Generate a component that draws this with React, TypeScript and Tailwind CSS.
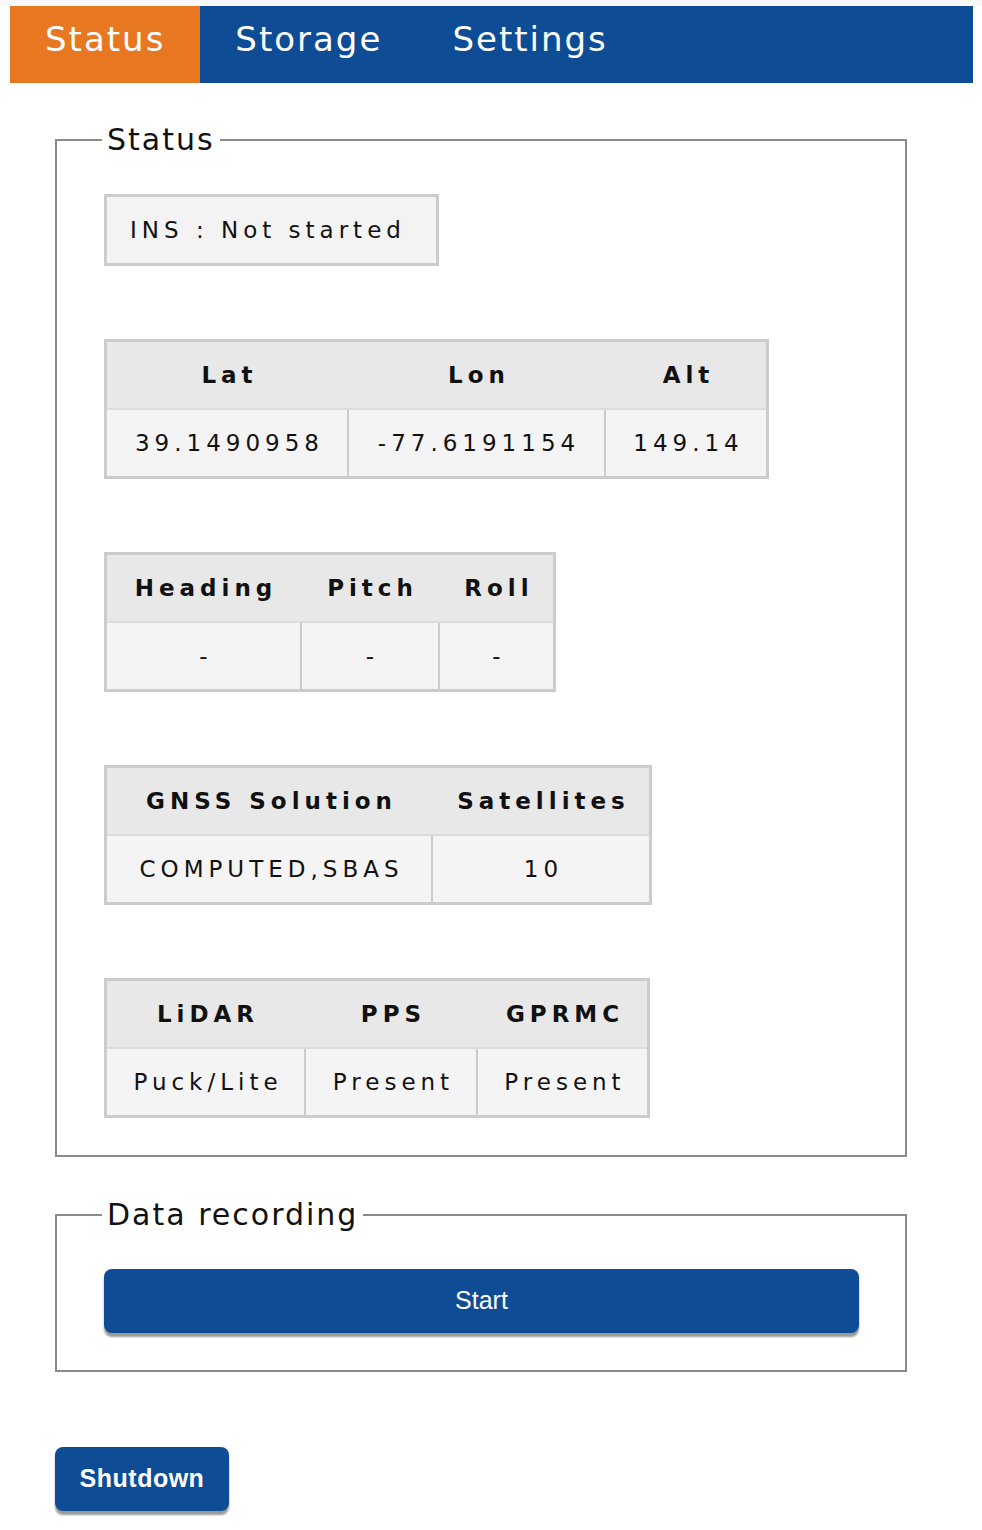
import React from "react";

const dv = { fontFamily: '"DejaVu Sans", Verdana, sans-serif' };
const ar = { fontFamily: '"Liberation Sans", Arial, sans-serif' };

type Tbl = { widths: number[]; heads: string[]; vals: string[] };

function DataTable({ widths, heads, vals }: Tbl) {
  return (
    <div className="inline-flex flex-col border-[3px] border-[#cccccc] self-start" style={dv}>
      <div className="flex bg-[#e8e8e8] h-[66px]">
        {heads.map((h, i) => (
          <div
            key={h}
            className={
              "flex items-center justify-center font-bold text-[23px] tracking-[5px] text-[#111] pl-[5px] " +
              (i > 0 ? "border-l-2 border-transparent" : "")
            }
            style={{ width: widths[i] + (i > 0 ? 2 : 0) }}
          >
            {h}
          </div>
        ))}
      </div>
      <div className="h-[2px] bg-[#dcdcdc]" />
      <div className="flex bg-[#f4f4f4] h-[66px]">
        {vals.map((v, i) => (
          <div
            key={i}
            className={
              "flex items-center justify-center text-[23px] tracking-[5px] text-[#111] pl-[5px] " +
              (i > 0 ? "border-l-2 border-[#cccccc]" : "")
            }
            style={{ width: widths[i] + (i > 0 ? 2 : 0) }}
          >
            {v}
          </div>
        ))}
      </div>
    </div>
  );
}

export default function App() {
  return (
    <div className="min-h-[1530px] bg-white">
      <div className="h-[6px] bg-[#f8f8f8]" />
      <nav className="ml-[10px] w-[963px] h-[77px] bg-[#0f4c96] flex" style={dv}>
        {["Status", "Storage", "Settings"].map((t, i) => (
          <div
            key={t}
            className={
              "h-full px-[35px] pt-[13px] text-[34px] leading-[40px] tracking-[2px] text-white " +
              (i === 0 ? "bg-[#e87722]" : "")
            }
          >
            {t}
          </div>
        ))}
      </nav>

      <fieldset className="ml-[55px] mt-[40px] w-[852px] border-2 border-[#8a8a8a] pl-[47px] pr-[45px] pt-[37px] pb-[37px]">
        <legend
          className="ml-[-2px] px-[5px] text-[30px] leading-[34px] tracking-[2px] text-[#111]"
          style={dv}
        >
          Status
        </legend>
        <div className="flex flex-col gap-[73px]">
          <div
            className="self-start w-[335px] h-[72px] border-[3px] border-[#cccccc] bg-[#f3f3f3] flex items-center pl-[23px] text-[23px] tracking-[5px] text-[#111]"
            style={dv}
          >
            INS : Not started
          </div>
          <DataTable widths={[240, 255, 160]} heads={["Lat", "Lon", "Alt"]} vals={["39.1490958", "-77.6191154", "149.14"]} />
          <DataTable widths={[193, 136, 113]} heads={["Heading", "Pitch", "Roll"]} vals={["-", "-", "-"]} />
          <DataTable widths={[324, 216]} heads={["GNSS Solution", "Satellites"]} vals={["COMPUTED,SBAS", "10"]} />
          <DataTable widths={[197, 170, 169]} heads={["LiDAR", "PPS", "GPRMC"]} vals={["Puck/Lite", "Present", "Present"]} />
        </div>
      </fieldset>

      <fieldset className="ml-[55px] mt-[41px] w-[852px] border-2 border-[#8a8a8a] pl-[47px] pr-[46px] pt-[37px] pb-[37px]">
        <legend
          className="ml-[-2px] px-[5px] text-[30px] leading-[34px] tracking-[2px] text-[#111]"
          style={dv}
        >
          Data recording
        </legend>
        <button
          className="w-full h-[64px] rounded-[8px] bg-[#0f4c96] text-white text-[25px] shadow-[0_4px_2px_#9a9a9a]"
          style={ar}
        >
          Start
        </button>
      </fieldset>

      <button
        className="ml-[55px] mt-[75px] w-[174px] h-[64px] rounded-[8px] bg-[#0f4c96] text-white text-[25px] font-bold tracking-[0.5px] shadow-[0_4px_2px_#9a9a9a]"
        style={ar}
      >
        Shutdown
      </button>
    </div>
  );
}
